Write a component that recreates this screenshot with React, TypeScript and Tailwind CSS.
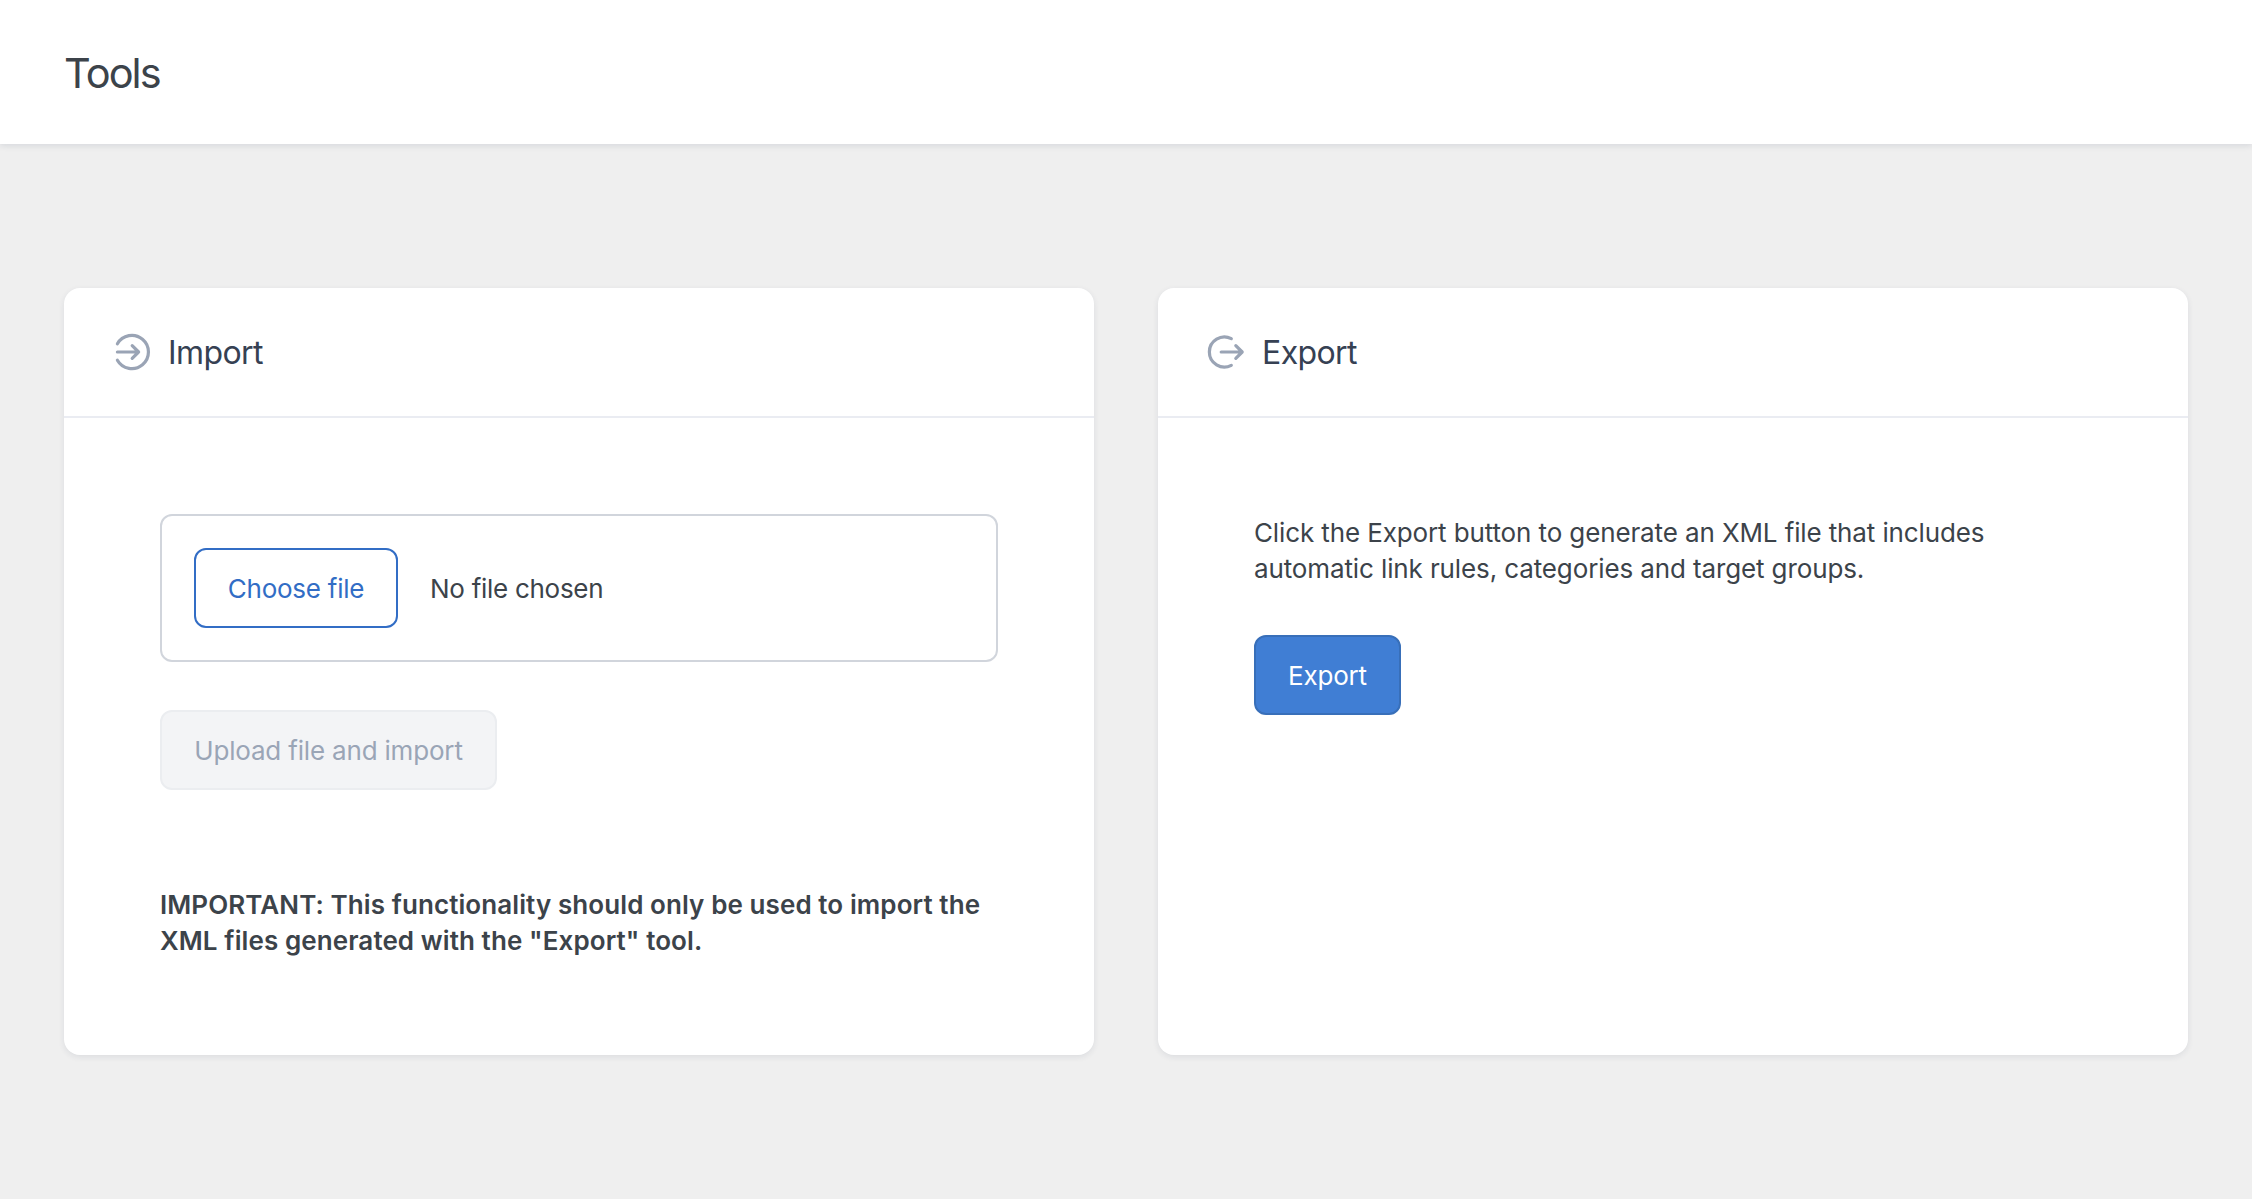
import type { ReactNode } from "react";

function ImportIcon() {
  return (
    <svg className="size-10 text-[#9aa4b5]" viewBox="0 0 40 40" fill="none" stroke="currentColor" strokeWidth="3.2" strokeLinecap="round" strokeLinejoin="round">
      <path d="M5.4 11.8A16.6 16.6 0 1 1 5.4 28.2" />
      <path d="M5.4 20H26.6M20.2 13.6L26.6 20L20.2 26.4" />
    </svg>
  );
}

function ExportIcon() {
  return (
    <svg className="size-10 text-[#9aa4b5]" viewBox="0 0 40 40" fill="none" stroke="currentColor" strokeWidth="3.2" strokeLinecap="round" strokeLinejoin="round">
      <path d="M25.3 6.7A15 15 0 1 0 25.3 33.3" />
      <path d="M15.2 20H36M29.8 13.6L36.2 20L29.8 26.4" />
    </svg>
  );
}

function Card({ icon, title, children }: { icon: ReactNode; title: string; children: ReactNode }) {
  return (
    <section className="rounded-[16px] bg-white shadow-[0_2px_6px_rgba(30,41,80,0.09)]">
      <header className="flex h-[130px] items-center gap-4 border-b-2 border-[#eaecf2] px-12">
        {icon}
        <h2 className="pt-0.5 text-[32px] leading-10 tracking-[-0.6px] text-[#364153]">{title}</h2>
      </header>
      <div className="p-24">{children}</div>
    </section>
  );
}

export default function App() {
  return (
    <div className="min-h-[1199px] bg-[#efefef] font-['Inter',sans-serif] text-[26px] leading-[36.4px] text-[#3c434a]">
      <header className="flex h-36 items-center bg-white px-16 shadow-[0_2px_6px_rgba(30,41,80,0.11)]">
        <h1 className="pt-px text-[41.5px] leading-[56px] tracking-[-1.9px]">Tools</h1>
      </header>
      <main className="grid grid-cols-2 gap-16 px-16 pt-36">
        <Card icon={<ImportIcon />} title="Import">
          <div className="flex h-[148px] items-center gap-8 rounded-[12px] border-2 border-[#d1d5dc] px-8">
            <button className="h-20 w-[204px] rounded-[12px] border-2 border-[#326dc5] pt-[3px] tracking-[-0.25px] text-[#326dc5]">Choose file</button>
            <span className="pt-[3px] tracking-[-0.28px]">No file chosen</span>
          </div>
          <button disabled className="mt-12 block h-20 w-[337px] rounded-[12px] border-2 border-[#ebedf0] bg-[#f3f4f6] pt-[3px] tracking-[-0.18px] text-[#9aa5b6]">
            Upload file and import
          </button>
          <p className="-mb-px mt-24 whitespace-nowrap pt-px font-semibold tracking-[0.09px]">
            IMPORTANT: This functionality should only be used to import the
            <br />
            XML files generated with the "Export" tool.
          </p>
        </Card>
        <Card icon={<ExportIcon />} title="Export">
          <p className="-mb-px pt-px tracking-[-0.12px]">
            Click the Export button to generate an XML file that includes
            <br />
            automatic link rules, categories and target groups.
          </p>
          <button className="mt-12 block h-20 w-[147px] rounded-[12px] border-2 border-[#386fb9] bg-[#407ed4] pt-[3px] tracking-[-0.2px] text-white">Export</button>
        </Card>
      </main>
    </div>
  );
}
